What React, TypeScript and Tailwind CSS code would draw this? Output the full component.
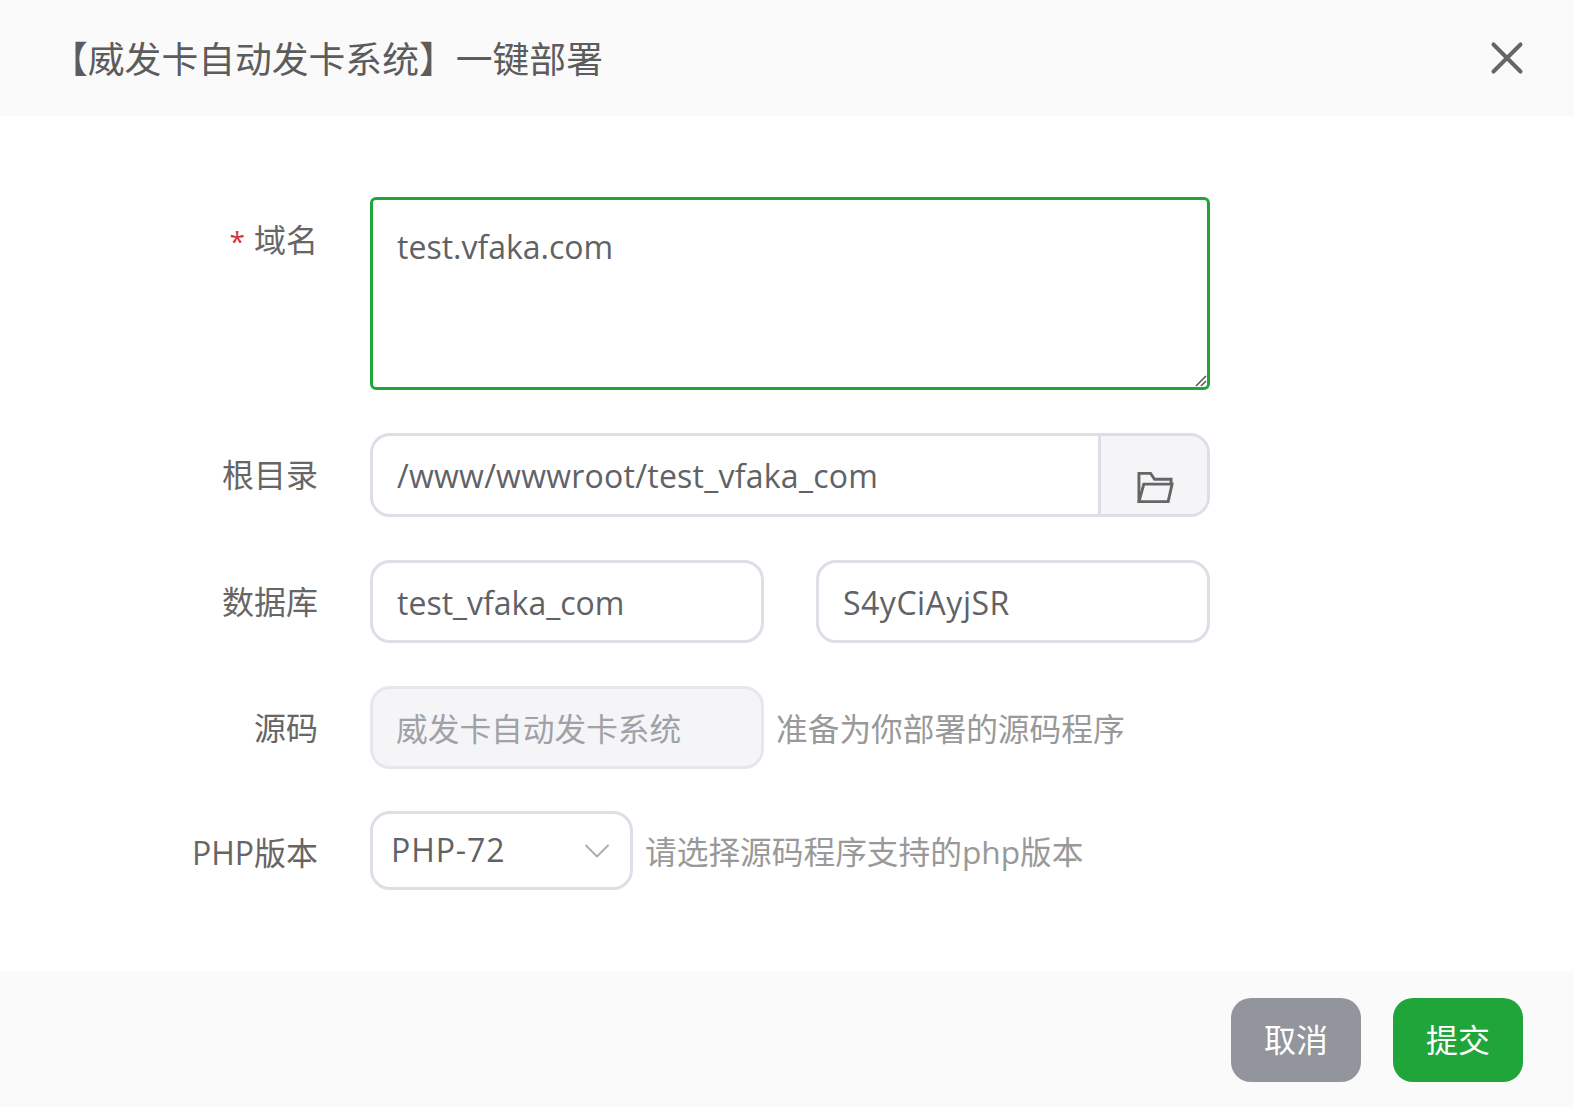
import { ChevronDown, X } from "lucide-react"
import type { ReactNode } from "react"

const inputBase =
  "h-[83px] rounded-[20px] border-[3px] border-[#dcdfe6] bg-white pl-[24px] pr-[24px] pt-[2px] text-[32px] text-[#606266] flex items-center"

function Row({ label, required, className, children }: { label: string; required?: boolean; className?: string; children: ReactNode }) {
  return (
    <div className={`flex ${className ?? ""}`}>
      <div className={`w-[318px] shrink-0 text-right text-[32px] text-[#666] ${required ? "pt-[19px]" : "pt-[18px]"}`}>
        {required && <span className="mr-[9px] text-[28px] text-[#d9303a]">*</span>}
        {label}
      </div>
      <div className="ml-[52px] flex items-center">{children}</div>
    </div>
  )
}

function FolderIcon() {
  return (
    <svg width="37" height="33" viewBox="0 0 38 33" fill="none" stroke="#666" strokeWidth="3" className="ml-[3px] mt-[35px]">
      <path d="M2 31V2h12l4 6h17v5" />
      <path d="M2 31l5-18h29l-4 18H2z" />
    </svg>
  )
}

export default function App() {
  return (
    <div className="flex h-screen w-full flex-col bg-white font-['Open_Sans','Noto_Sans_CJK_SC',sans-serif]">
      <div className="flex h-[116px] shrink-0 items-center justify-between bg-[#fafafa] pl-[51px] pr-[40px]">
        <h1 className="pt-[3px] text-[36.8px] font-normal text-[#5c5c5c]">【威发卡自动发卡系统】一键部署</h1>
        <X className="text-[#666]" size={54} strokeWidth={1.8} />
      </div>

      <div className="flex-1 pt-[81px]">
        <Row label="域名" required>
          <div className="relative h-[193px] w-[840px] rounded-[6px] border-[3px] border-[#20a53a] pb-[22px] pl-[24px] pr-[24px] pt-[23px] text-[32px] text-[#606266]">
            test.vfaka.com
            <svg width="12" height="12" viewBox="0 0 12 12" className="absolute bottom-0 right-0" stroke="#555" strokeWidth="1.5">
              <path d="M1 11L11 1M6 11l5-5" />
            </svg>
          </div>
        </Row>

        <Row label="根目录" className="mt-[43px]">
          <div className="flex h-[84px] w-[840px] overflow-hidden rounded-[20px] border-[3px] border-[#dcdfe6] text-[32px] text-[#606266]">
            <div className="flex flex-1 items-center pl-[24px] pt-[2px] tracking-[0.25px]">/www/wwwroot/test_vfaka_com</div>
            <div className="flex w-[109px] justify-center border-l-[3px] border-[#dcdfe6] bg-[#f5f5f7]">
              <FolderIcon />
            </div>
          </div>
        </Row>

        <Row label="数据库" className="mt-[43px]">
          <div className="flex w-[840px] justify-between">
            <div className={`${inputBase} w-[394px]`}>test_vfaka_com</div>
            <div className={`${inputBase} w-[394px] tracking-[0.5px]`}>S4yCiAyjSR</div>
          </div>
        </Row>

        <Row label="源码" className="mt-[43px]">
          <div className={`${inputBase} w-[394px] !border-[#e4e7ed] !bg-[#f5f5f7] !pl-[23px] !text-[31.7px] !text-[#a0a2a8]`}>威发卡自动发卡系统</div>
          <span className="ml-[12px] pt-[2px] text-[31.7px] text-[#999]">准备为你部署的源码程序</span>
        </Row>

        <Row label="PHP版本" className="mt-[42px]">
          <div className="flex h-[79px] w-[263px] items-center justify-between rounded-[20px] border-[3px] border-[#dcdfe6] pl-[18px] pr-[11px] text-[32px] text-[#606266]">
            <span className="mt-[-2px] tracking-[0.9px]">PHP-72</span>
            <ChevronDown className="text-[#a8abb2]" size={44} strokeWidth={1} />
          </div>
          <span className="ml-[12px] pt-[2px] text-[31.7px] text-[#999]">请选择源码程序支持的php版本</span>
        </Row>
      </div>

      <div className="flex h-[136px] shrink-0 items-center justify-end gap-[32px] bg-[#fafafa] pr-[51px] pt-[2px]">
        <button className="h-[84px] w-[130px] rounded-[20px] bg-[#93959c] text-[32px] text-white">取消</button>
        <button className="h-[84px] w-[130px] rounded-[20px] bg-[#20a53a] text-[32px] text-white">提交</button>
      </div>
    </div>
  )
}
